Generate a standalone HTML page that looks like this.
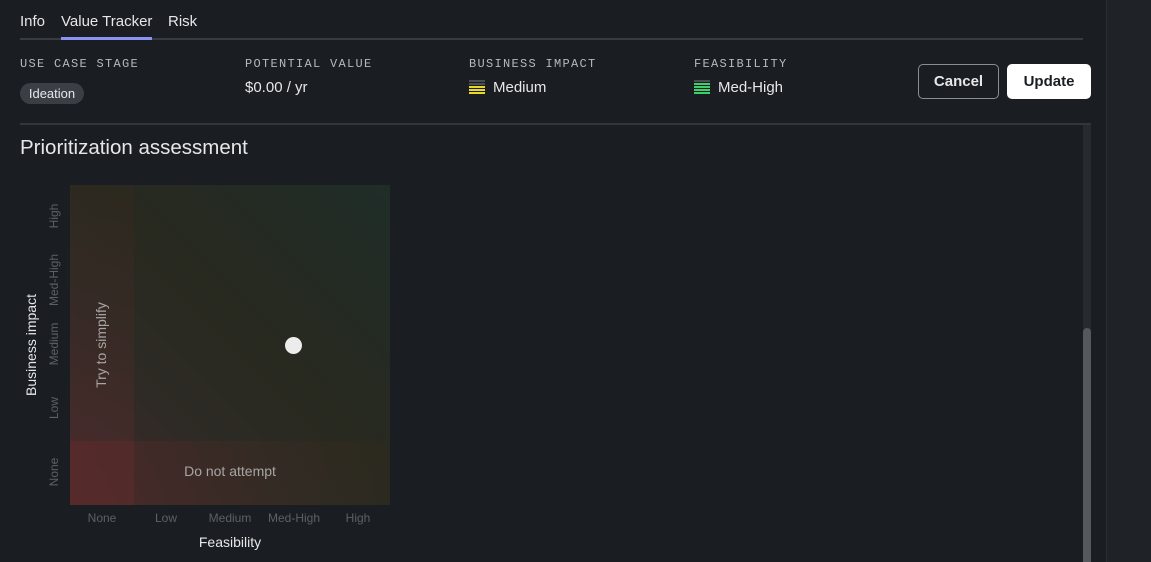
<!DOCTYPE html>
<html><head><style>
*{margin:0;padding:0;box-sizing:border-box}
html,body{width:1151px;height:562px;overflow:hidden}
body{background:#1a1d21;font-family:"Liberation Sans",sans-serif;color:#e6e7e9;position:relative}
.abs{position:absolute}
.tab{position:absolute;top:13px;font-size:15px;color:#e6e7e9}
.lbl{position:absolute;top:57px;font-family:"Liberation Mono",monospace;font-size:12px;letter-spacing:1.3px;color:#b7b9bc}
.val{position:absolute;top:79px;font-size:15px;color:#e6e7e9}
.bars{position:absolute;top:80px;width:16px;height:15px}
.bars i{display:block;height:2px;margin-bottom:1px}
.ax{position:absolute;font-size:12px;color:#5d6166}
.vt{position:absolute;transform:rotate(-90deg);transform-origin:center;white-space:nowrap;text-align:center}
</style></head><body>
<div class="tab" style="left:20px">Info</div>
<div class="tab" style="left:61px">Value Tracker</div>
<div class="tab" style="left:168px">Risk</div>
<div class="abs" style="left:20px;top:38px;width:1063px;height:2px;background:#383c42"></div>
<div class="abs" style="left:61px;top:37px;width:91px;height:3px;background:#8a93f2"></div>

<div class="lbl" style="left:20px">USE CASE STAGE</div>
<div class="lbl" style="left:245px">POTENTIAL VALUE</div>
<div class="lbl" style="left:469px">BUSINESS IMPACT</div>
<div class="lbl" style="left:694px">FEASIBILITY</div>
<div class="abs" style="left:20px;top:83px;width:64px;height:21px;border-radius:11px;background:#3b3f45;font-size:13px;line-height:21px;text-align:center;color:#e6e7e9">Ideation</div>
<div class="val" style="left:245px">$0.00 / yr</div>
<div class="bars" style="left:469px"><i style="background:#4a4d52"></i><i style="background:#4a4d52"></i><i style="background:#e8d82a"></i><i style="background:#e8d82a"></i><i style="background:#e8d82a"></i></div>
<div class="val" style="left:493px">Medium</div>
<div class="bars" style="left:694px"><i style="background:#4a4d52"></i><i style="background:#3ccf6b"></i><i style="background:#3ccf6b"></i><i style="background:#3ccf6b"></i><i style="background:#3ccf6b"></i></div>
<div class="val" style="left:718px">Med-High</div>
<div class="abs" style="left:918px;top:64px;width:81px;height:35px;border:1px solid #8a8d92;border-radius:5px;font-size:15px;font-weight:bold;line-height:33px;text-align:center">Cancel</div>
<div class="abs" style="left:1007px;top:64px;width:84px;height:35px;background:#fff;border-radius:5px;font-size:15px;font-weight:bold;line-height:35px;text-align:center;color:#1a1d21">Update</div>
<div class="abs" style="left:20px;top:123px;width:1071px;height:2px;background:#33373c"></div>
<div class="abs" style="left:1083px;top:125px;width:8px;height:437px;background:#272a2f"></div>
<div class="abs" style="left:1083px;top:328px;width:8px;height:234px;background:#55595e;border-radius:4px 4px 0 0"></div>
<div class="abs" style="left:1106px;top:0;width:45px;height:562px;background:#1f2327;border-left:1px solid #2a2e33"></div>

<div class="abs" style="left:20px;top:136px;font-size:20.5px;color:#e6e7e9">Prioritization assessment</div>

<div class="abs" style="left:70px;top:185px;width:320px;height:320px;background:linear-gradient(45deg,#3f2a2b 0%,#2c2a24 35%,#28291f 55%,#1f2d28 100%)"></div>
<div class="abs" style="left:70px;top:185px;width:64px;height:256px;background:linear-gradient(0deg,rgba(90,45,45,.35),rgba(60,40,30,.2))"></div>
<div class="abs" style="left:70px;top:441px;width:320px;height:64px;background:linear-gradient(90deg,rgba(90,40,40,.45),rgba(70,45,35,.3) 60%,rgba(55,45,30,.2))"></div>
<div class="abs" style="left:70px;top:441px;width:64px;height:64px;background:rgba(110,45,45,.35)"></div>
<div class="abs" style="left:134px;top:463px;width:192px;text-align:center;font-size:14px;color:#a8a5a3">Do not attempt</div>
<div class="vt" style="left:41px;top:337px;width:120px;font-size:14px;color:#a8a5a3">Try to simplify</div>
<div class="abs" style="left:285px;top:337px;width:17px;height:17px;border-radius:50%;background:#ececec"></div>

<div class="vt ax" style="left:24px;top:209px;width:60px">High</div>
<div class="vt ax" style="left:24px;top:273px;width:60px">Med-High</div>
<div class="vt ax" style="left:24px;top:337px;width:60px">Medium</div>
<div class="vt ax" style="left:24px;top:401px;width:60px">Low</div>
<div class="vt ax" style="left:24px;top:465px;width:60px">None</div>
<div class="ax" style="left:70px;top:511px;width:64px;text-align:center">None</div>
<div class="ax" style="left:134px;top:511px;width:64px;text-align:center">Low</div>
<div class="ax" style="left:198px;top:511px;width:64px;text-align:center">Medium</div>
<div class="ax" style="left:262px;top:511px;width:64px;text-align:center">Med-High</div>
<div class="ax" style="left:326px;top:511px;width:64px;text-align:center">High</div>
<div class="abs" style="left:70px;top:534px;width:320px;text-align:center;font-size:14px;color:#e6e7e9">Feasibility</div>
<div class="vt" style="left:-29px;top:337px;width:120px;font-size:14px;color:#e6e7e9">Business impact</div>
</body></html>
